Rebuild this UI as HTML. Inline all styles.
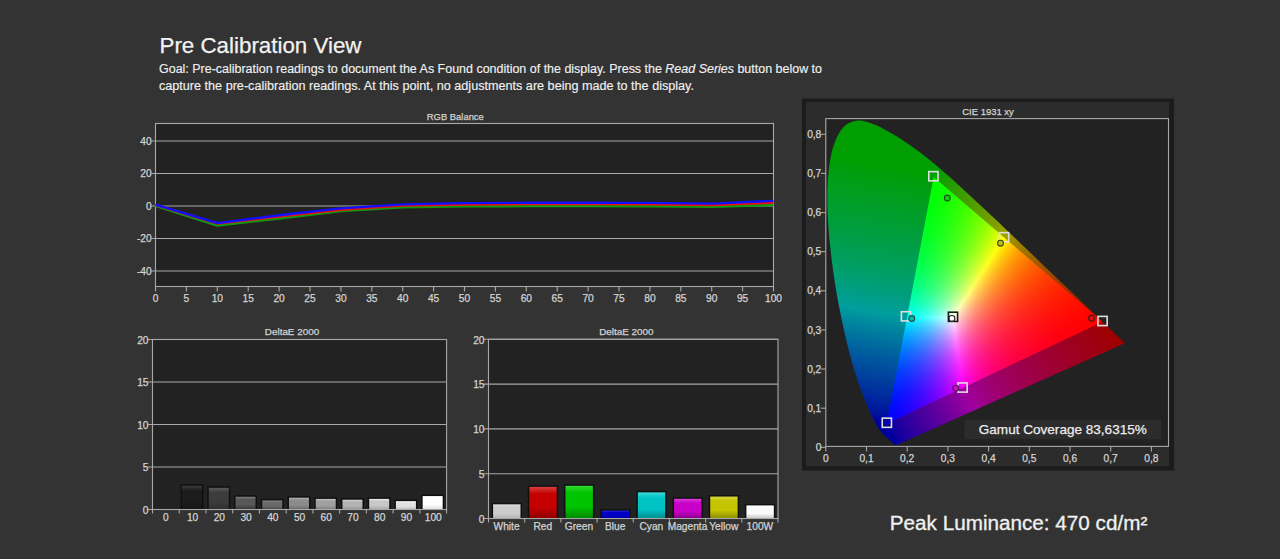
<!DOCTYPE html>
<html><head><meta charset="utf-8">
<style>
html,body{margin:0;padding:0;}
body{width:1280px;height:559px;background:#333333;position:relative;overflow:hidden;font-family:"Liberation Sans", sans-serif;}
svg{position:absolute;left:0;top:0;}
#cie{position:absolute;left:0;top:0;}
</style></head><body>
<svg width="1280" height="559" viewBox="0 0 1280 559" font-family='"Liberation Sans", sans-serif'>
<text x="159.5" y="53.1" font-size="22" fill="#f2f2f2" stroke="#f2f2f2" stroke-width="0.25" textLength="202" lengthAdjust="spacingAndGlyphs">Pre Calibration View</text>
<text x="159" y="72.6" font-size="12.3" fill="#f0f0f0" stroke="#f0f0f0" stroke-width="0.15" textLength="663" lengthAdjust="spacingAndGlyphs">Goal: Pre-calibration readings to document the As Found condition of the display. Press the <tspan font-style="italic">Read Series</tspan> button below to</text>
<text x="159" y="89.6" font-size="12.3" fill="#f0f0f0" stroke="#f0f0f0" stroke-width="0.15" textLength="535" lengthAdjust="spacingAndGlyphs">capture the pre-calibration readings. At this point, no adjustments are being made to the display.</text>
<text x="889.8" y="530.2" font-size="19.5" fill="#f0f0f0" stroke="#f0f0f0" stroke-width="0.3" textLength="257.5" lengthAdjust="spacingAndGlyphs">Peak Luminance: 470 cd/m²</text>
<rect x="155.5" y="123.5" width="618.0" height="163.0" fill="#222222" stroke="#a8a8a8" stroke-width="1.1"/>
<line x1="151.5" y1="141.00" x2="773.5" y2="141.00" stroke="#a8a8a8" stroke-width="1.1"/>
<text x="151.70" y="144.60" font-size="10.2" text-anchor="end" fill="#d4d4d4" stroke="#d4d4d4" stroke-width="0.25" >40</text>
<line x1="151.5" y1="173.50" x2="773.5" y2="173.50" stroke="#a8a8a8" stroke-width="1.1"/>
<text x="151.70" y="177.10" font-size="10.2" text-anchor="end" fill="#d4d4d4" stroke="#d4d4d4" stroke-width="0.25" >20</text>
<line x1="151.5" y1="206.00" x2="773.5" y2="206.00" stroke="#a8a8a8" stroke-width="1.1"/>
<text x="151.70" y="209.60" font-size="10.2" text-anchor="end" fill="#d4d4d4" stroke="#d4d4d4" stroke-width="0.25" >0</text>
<line x1="151.5" y1="238.50" x2="773.5" y2="238.50" stroke="#a8a8a8" stroke-width="1.1"/>
<text x="151.70" y="242.10" font-size="10.2" text-anchor="end" fill="#d4d4d4" stroke="#d4d4d4" stroke-width="0.25" >-20</text>
<line x1="151.5" y1="271.00" x2="773.5" y2="271.00" stroke="#a8a8a8" stroke-width="1.1"/>
<text x="151.70" y="274.60" font-size="10.2" text-anchor="end" fill="#d4d4d4" stroke="#d4d4d4" stroke-width="0.25" >-40</text>
<line x1="155.50" y1="286.5" x2="155.50" y2="291.5" stroke="#a8a8a8" stroke-width="1.1"/>
<text x="155.50" y="301.50" font-size="10.2" text-anchor="middle" fill="#d4d4d4" stroke="#d4d4d4" stroke-width="0.25" >0</text>
<line x1="186.40" y1="286.5" x2="186.40" y2="291.5" stroke="#a8a8a8" stroke-width="1.1"/>
<text x="186.40" y="301.50" font-size="10.2" text-anchor="middle" fill="#d4d4d4" stroke="#d4d4d4" stroke-width="0.25" >5</text>
<line x1="217.30" y1="286.5" x2="217.30" y2="291.5" stroke="#a8a8a8" stroke-width="1.1"/>
<text x="217.30" y="301.50" font-size="10.2" text-anchor="middle" fill="#d4d4d4" stroke="#d4d4d4" stroke-width="0.25" >10</text>
<line x1="248.20" y1="286.5" x2="248.20" y2="291.5" stroke="#a8a8a8" stroke-width="1.1"/>
<text x="248.20" y="301.50" font-size="10.2" text-anchor="middle" fill="#d4d4d4" stroke="#d4d4d4" stroke-width="0.25" >15</text>
<line x1="279.10" y1="286.5" x2="279.10" y2="291.5" stroke="#a8a8a8" stroke-width="1.1"/>
<text x="279.10" y="301.50" font-size="10.2" text-anchor="middle" fill="#d4d4d4" stroke="#d4d4d4" stroke-width="0.25" >20</text>
<line x1="310.00" y1="286.5" x2="310.00" y2="291.5" stroke="#a8a8a8" stroke-width="1.1"/>
<text x="310.00" y="301.50" font-size="10.2" text-anchor="middle" fill="#d4d4d4" stroke="#d4d4d4" stroke-width="0.25" >25</text>
<line x1="340.90" y1="286.5" x2="340.90" y2="291.5" stroke="#a8a8a8" stroke-width="1.1"/>
<text x="340.90" y="301.50" font-size="10.2" text-anchor="middle" fill="#d4d4d4" stroke="#d4d4d4" stroke-width="0.25" >30</text>
<line x1="371.80" y1="286.5" x2="371.80" y2="291.5" stroke="#a8a8a8" stroke-width="1.1"/>
<text x="371.80" y="301.50" font-size="10.2" text-anchor="middle" fill="#d4d4d4" stroke="#d4d4d4" stroke-width="0.25" >35</text>
<line x1="402.70" y1="286.5" x2="402.70" y2="291.5" stroke="#a8a8a8" stroke-width="1.1"/>
<text x="402.70" y="301.50" font-size="10.2" text-anchor="middle" fill="#d4d4d4" stroke="#d4d4d4" stroke-width="0.25" >40</text>
<line x1="433.60" y1="286.5" x2="433.60" y2="291.5" stroke="#a8a8a8" stroke-width="1.1"/>
<text x="433.60" y="301.50" font-size="10.2" text-anchor="middle" fill="#d4d4d4" stroke="#d4d4d4" stroke-width="0.25" >45</text>
<line x1="464.50" y1="286.5" x2="464.50" y2="291.5" stroke="#a8a8a8" stroke-width="1.1"/>
<text x="464.50" y="301.50" font-size="10.2" text-anchor="middle" fill="#d4d4d4" stroke="#d4d4d4" stroke-width="0.25" >50</text>
<line x1="495.40" y1="286.5" x2="495.40" y2="291.5" stroke="#a8a8a8" stroke-width="1.1"/>
<text x="495.40" y="301.50" font-size="10.2" text-anchor="middle" fill="#d4d4d4" stroke="#d4d4d4" stroke-width="0.25" >55</text>
<line x1="526.30" y1="286.5" x2="526.30" y2="291.5" stroke="#a8a8a8" stroke-width="1.1"/>
<text x="526.30" y="301.50" font-size="10.2" text-anchor="middle" fill="#d4d4d4" stroke="#d4d4d4" stroke-width="0.25" >60</text>
<line x1="557.20" y1="286.5" x2="557.20" y2="291.5" stroke="#a8a8a8" stroke-width="1.1"/>
<text x="557.20" y="301.50" font-size="10.2" text-anchor="middle" fill="#d4d4d4" stroke="#d4d4d4" stroke-width="0.25" >65</text>
<line x1="588.10" y1="286.5" x2="588.10" y2="291.5" stroke="#a8a8a8" stroke-width="1.1"/>
<text x="588.10" y="301.50" font-size="10.2" text-anchor="middle" fill="#d4d4d4" stroke="#d4d4d4" stroke-width="0.25" >70</text>
<line x1="619.00" y1="286.5" x2="619.00" y2="291.5" stroke="#a8a8a8" stroke-width="1.1"/>
<text x="619.00" y="301.50" font-size="10.2" text-anchor="middle" fill="#d4d4d4" stroke="#d4d4d4" stroke-width="0.25" >75</text>
<line x1="649.90" y1="286.5" x2="649.90" y2="291.5" stroke="#a8a8a8" stroke-width="1.1"/>
<text x="649.90" y="301.50" font-size="10.2" text-anchor="middle" fill="#d4d4d4" stroke="#d4d4d4" stroke-width="0.25" >80</text>
<line x1="680.80" y1="286.5" x2="680.80" y2="291.5" stroke="#a8a8a8" stroke-width="1.1"/>
<text x="680.80" y="301.50" font-size="10.2" text-anchor="middle" fill="#d4d4d4" stroke="#d4d4d4" stroke-width="0.25" >85</text>
<line x1="711.70" y1="286.5" x2="711.70" y2="291.5" stroke="#a8a8a8" stroke-width="1.1"/>
<text x="711.70" y="301.50" font-size="10.2" text-anchor="middle" fill="#d4d4d4" stroke="#d4d4d4" stroke-width="0.25" >90</text>
<line x1="742.60" y1="286.5" x2="742.60" y2="291.5" stroke="#a8a8a8" stroke-width="1.1"/>
<text x="742.60" y="301.50" font-size="10.2" text-anchor="middle" fill="#d4d4d4" stroke="#d4d4d4" stroke-width="0.25" >95</text>
<line x1="773.50" y1="286.5" x2="773.50" y2="291.5" stroke="#a8a8a8" stroke-width="1.1"/>
<text x="773.50" y="301.50" font-size="10.2" text-anchor="middle" fill="#d4d4d4" stroke="#d4d4d4" stroke-width="0.25" >100</text>
<text x="455.30" y="120.40" font-size="9.8" text-anchor="middle" fill="#d4d4d4" stroke="#d4d4d4" stroke-width="0.25" textLength="57" lengthAdjust="spacingAndGlyphs" >RGB Balance</text>
<polyline points="155.50,205.68 217.30,225.50 279.10,218.35 340.90,211.04 402.70,207.14 464.50,206.32 526.30,206.00 588.10,206.00 649.90,206.16 711.70,206.65 773.50,205.03" fill="none" stroke="#109a10" stroke-width="2.6" stroke-linejoin="round"/>
<polyline points="155.50,204.86 217.30,223.71 279.10,216.72 340.90,209.74 402.70,205.51 464.50,204.54 526.30,204.21 588.10,204.21 649.90,204.38 711.70,205.03 773.50,202.75" fill="none" stroke="#e81010" stroke-width="2.3" stroke-linejoin="round"/>
<polyline points="155.50,204.70 217.30,223.22 279.10,215.26 340.90,208.44 402.70,204.38 464.50,203.07 526.30,202.75 588.10,202.75 649.90,202.91 711.70,203.56 773.50,200.80" fill="none" stroke="#1010ff" stroke-width="2.3" stroke-linejoin="round"/>
<rect x="152.5" y="339.5" width="294.1" height="170.0" fill="#222222" stroke="#a8a8a8" stroke-width="1.1"/>
<line x1="147.5" y1="339.50" x2="446.6" y2="339.50" stroke="#a8a8a8" stroke-width="1.1"/>
<text x="148.50" y="343.70" font-size="10.2" text-anchor="end" fill="#d4d4d4" stroke="#d4d4d4" stroke-width="0.25" >20</text>
<line x1="147.5" y1="382.00" x2="446.6" y2="382.00" stroke="#a8a8a8" stroke-width="1.1"/>
<text x="148.50" y="386.20" font-size="10.2" text-anchor="end" fill="#d4d4d4" stroke="#d4d4d4" stroke-width="0.25" >15</text>
<line x1="147.5" y1="424.50" x2="446.6" y2="424.50" stroke="#a8a8a8" stroke-width="1.1"/>
<text x="148.50" y="428.70" font-size="10.2" text-anchor="end" fill="#d4d4d4" stroke="#d4d4d4" stroke-width="0.25" >10</text>
<line x1="147.5" y1="467.00" x2="446.6" y2="467.00" stroke="#a8a8a8" stroke-width="1.1"/>
<text x="148.50" y="471.20" font-size="10.2" text-anchor="end" fill="#d4d4d4" stroke="#d4d4d4" stroke-width="0.25" >5</text>
<line x1="147.5" y1="509.50" x2="446.6" y2="509.50" stroke="#a8a8a8" stroke-width="1.1"/>
<text x="148.50" y="513.70" font-size="10.2" text-anchor="end" fill="#d4d4d4" stroke="#d4d4d4" stroke-width="0.25" >0</text>
<line x1="152.50" y1="509.5" x2="152.50" y2="513.5" stroke="#a8a8a8" stroke-width="1.1"/>
<line x1="179.24" y1="509.5" x2="179.24" y2="513.5" stroke="#a8a8a8" stroke-width="1.1"/>
<line x1="205.97" y1="509.5" x2="205.97" y2="513.5" stroke="#a8a8a8" stroke-width="1.1"/>
<line x1="232.71" y1="509.5" x2="232.71" y2="513.5" stroke="#a8a8a8" stroke-width="1.1"/>
<line x1="259.45" y1="509.5" x2="259.45" y2="513.5" stroke="#a8a8a8" stroke-width="1.1"/>
<line x1="286.18" y1="509.5" x2="286.18" y2="513.5" stroke="#a8a8a8" stroke-width="1.1"/>
<line x1="312.92" y1="509.5" x2="312.92" y2="513.5" stroke="#a8a8a8" stroke-width="1.1"/>
<line x1="339.65" y1="509.5" x2="339.65" y2="513.5" stroke="#a8a8a8" stroke-width="1.1"/>
<line x1="366.39" y1="509.5" x2="366.39" y2="513.5" stroke="#a8a8a8" stroke-width="1.1"/>
<line x1="393.13" y1="509.5" x2="393.13" y2="513.5" stroke="#a8a8a8" stroke-width="1.1"/>
<line x1="419.86" y1="509.5" x2="419.86" y2="513.5" stroke="#a8a8a8" stroke-width="1.1"/>
<line x1="446.60" y1="509.5" x2="446.60" y2="513.5" stroke="#a8a8a8" stroke-width="1.1"/>
<text x="165.87" y="520.50" font-size="10.2" text-anchor="middle" fill="#d4d4d4" stroke="#d4d4d4" stroke-width="0.25" >0</text>
<linearGradient id="g292_1" x1="0" y1="0" x2="0" y2="1"><stop offset="0" stop-color="#3c3c3c"/><stop offset="0.22" stop-color="#1c1c1c"/><stop offset="0.65" stop-color="#1c1c1c"/><stop offset="1" stop-color="#161616"/></linearGradient>
<rect x="180.54" y="484.20" width="23.00" height="25.30" fill="#101010"/>
<rect x="182.04" y="485.70" width="20.00" height="23.30" fill="url(#g292_1)"/>
<text x="192.60" y="520.50" font-size="10.2" text-anchor="middle" fill="#d4d4d4" stroke="#d4d4d4" stroke-width="0.25" >10</text>
<linearGradient id="g292_2" x1="0" y1="0" x2="0" y2="1"><stop offset="0" stop-color="#5a5a5a"/><stop offset="0.22" stop-color="#3c3c3c"/><stop offset="0.65" stop-color="#3c3c3c"/><stop offset="1" stop-color="#303030"/></linearGradient>
<rect x="207.27" y="486.32" width="23.00" height="23.18" fill="#101010"/>
<rect x="208.77" y="487.82" width="20.00" height="21.18" fill="url(#g292_2)"/>
<text x="219.34" y="520.50" font-size="10.2" text-anchor="middle" fill="#d4d4d4" stroke="#d4d4d4" stroke-width="0.25" >20</text>
<linearGradient id="g292_3" x1="0" y1="0" x2="0" y2="1"><stop offset="0" stop-color="#808080"/><stop offset="0.22" stop-color="#585858"/><stop offset="0.65" stop-color="#585858"/><stop offset="1" stop-color="#3a3a3a"/></linearGradient>
<rect x="234.01" y="495.25" width="23.00" height="14.25" fill="#101010"/>
<rect x="235.51" y="496.75" width="20.00" height="12.25" fill="url(#g292_3)"/>
<text x="246.08" y="520.50" font-size="10.2" text-anchor="middle" fill="#d4d4d4" stroke="#d4d4d4" stroke-width="0.25" >30</text>
<linearGradient id="g292_4" x1="0" y1="0" x2="0" y2="1"><stop offset="0" stop-color="#929292"/><stop offset="0.22" stop-color="#6a6a6a"/><stop offset="0.65" stop-color="#6a6a6a"/><stop offset="1" stop-color="#4c4c4c"/></linearGradient>
<rect x="260.75" y="498.99" width="23.00" height="10.51" fill="#101010"/>
<rect x="262.25" y="500.49" width="20.00" height="8.51" fill="url(#g292_4)"/>
<text x="272.81" y="520.50" font-size="10.2" text-anchor="middle" fill="#d4d4d4" stroke="#d4d4d4" stroke-width="0.25" >40</text>
<linearGradient id="g292_5" x1="0" y1="0" x2="0" y2="1"><stop offset="0" stop-color="#b4b4b4"/><stop offset="0.22" stop-color="#8c8c8c"/><stop offset="0.65" stop-color="#8c8c8c"/><stop offset="1" stop-color="#6e6e6e"/></linearGradient>
<rect x="287.48" y="496.19" width="23.00" height="13.31" fill="#101010"/>
<rect x="288.98" y="497.69" width="20.00" height="11.31" fill="url(#g292_5)"/>
<text x="299.55" y="520.50" font-size="10.2" text-anchor="middle" fill="#d4d4d4" stroke="#d4d4d4" stroke-width="0.25" >50</text>
<linearGradient id="g292_6" x1="0" y1="0" x2="0" y2="1"><stop offset="0" stop-color="#c8c8c8"/><stop offset="0.22" stop-color="#a0a0a0"/><stop offset="0.65" stop-color="#a0a0a0"/><stop offset="1" stop-color="#828282"/></linearGradient>
<rect x="314.22" y="497.38" width="23.00" height="12.12" fill="#101010"/>
<rect x="315.72" y="498.88" width="20.00" height="10.12" fill="url(#g292_6)"/>
<text x="326.29" y="520.50" font-size="10.2" text-anchor="middle" fill="#d4d4d4" stroke="#d4d4d4" stroke-width="0.25" >60</text>
<linearGradient id="g292_7" x1="0" y1="0" x2="0" y2="1"><stop offset="0" stop-color="#dcdcdc"/><stop offset="0.22" stop-color="#b4b4b4"/><stop offset="0.65" stop-color="#b4b4b4"/><stop offset="1" stop-color="#969696"/></linearGradient>
<rect x="340.95" y="498.23" width="23.00" height="11.27" fill="#101010"/>
<rect x="342.45" y="499.73" width="20.00" height="9.27" fill="url(#g292_7)"/>
<text x="353.02" y="520.50" font-size="10.2" text-anchor="middle" fill="#d4d4d4" stroke="#d4d4d4" stroke-width="0.25" >70</text>
<linearGradient id="g292_8" x1="0" y1="0" x2="0" y2="1"><stop offset="0" stop-color="#f0f0f0"/><stop offset="0.22" stop-color="#c8c8c8"/><stop offset="0.65" stop-color="#c8c8c8"/><stop offset="1" stop-color="#aaaaaa"/></linearGradient>
<rect x="367.69" y="497.38" width="23.00" height="12.12" fill="#101010"/>
<rect x="369.19" y="498.88" width="20.00" height="10.12" fill="url(#g292_8)"/>
<text x="379.76" y="520.50" font-size="10.2" text-anchor="middle" fill="#d4d4d4" stroke="#d4d4d4" stroke-width="0.25" >80</text>
<linearGradient id="g292_9" x1="0" y1="0" x2="0" y2="1"><stop offset="0" stop-color="#ffffff"/><stop offset="0.22" stop-color="#e1e1e1"/><stop offset="0.65" stop-color="#e1e1e1"/><stop offset="1" stop-color="#c3c3c3"/></linearGradient>
<rect x="394.43" y="499.67" width="23.00" height="9.83" fill="#101010"/>
<rect x="395.93" y="501.17" width="20.00" height="7.83" fill="url(#g292_9)"/>
<text x="406.50" y="520.50" font-size="10.2" text-anchor="middle" fill="#d4d4d4" stroke="#d4d4d4" stroke-width="0.25" >90</text>
<linearGradient id="g292_10" x1="0" y1="0" x2="0" y2="1"><stop offset="0" stop-color="#ffffff"/><stop offset="0.22" stop-color="#ffffff"/><stop offset="0.65" stop-color="#ffffff"/><stop offset="1" stop-color="#e1e1e1"/></linearGradient>
<rect x="421.16" y="494.57" width="23.00" height="14.93" fill="#101010"/>
<rect x="422.66" y="496.07" width="20.00" height="12.93" fill="url(#g292_10)"/>
<text x="433.23" y="520.50" font-size="10.2" text-anchor="middle" fill="#d4d4d4" stroke="#d4d4d4" stroke-width="0.25" >100</text>
<line x1="152.5" y1="509.5" x2="446.6" y2="509.5" stroke="#a8a8a8" stroke-width="1.1"/>
<text x="292.00" y="335.00" font-size="9.8" text-anchor="middle" fill="#d4d4d4" stroke="#d4d4d4" stroke-width="0.25" textLength="54.3" lengthAdjust="spacingAndGlyphs" >DeltaE 2000</text>
<rect x="488.5" y="339.3" width="289.5" height="179.2" fill="#222222" stroke="#a8a8a8" stroke-width="1.1"/>
<line x1="483.5" y1="339.30" x2="778.0" y2="339.30" stroke="#a8a8a8" stroke-width="1.1"/>
<text x="484.50" y="343.50" font-size="10.2" text-anchor="end" fill="#d4d4d4" stroke="#d4d4d4" stroke-width="0.25" >20</text>
<line x1="483.5" y1="384.10" x2="778.0" y2="384.10" stroke="#a8a8a8" stroke-width="1.1"/>
<text x="484.50" y="388.30" font-size="10.2" text-anchor="end" fill="#d4d4d4" stroke="#d4d4d4" stroke-width="0.25" >15</text>
<line x1="483.5" y1="428.90" x2="778.0" y2="428.90" stroke="#a8a8a8" stroke-width="1.1"/>
<text x="484.50" y="433.10" font-size="10.2" text-anchor="end" fill="#d4d4d4" stroke="#d4d4d4" stroke-width="0.25" >10</text>
<line x1="483.5" y1="473.70" x2="778.0" y2="473.70" stroke="#a8a8a8" stroke-width="1.1"/>
<text x="484.50" y="477.90" font-size="10.2" text-anchor="end" fill="#d4d4d4" stroke="#d4d4d4" stroke-width="0.25" >5</text>
<line x1="483.5" y1="518.50" x2="778.0" y2="518.50" stroke="#a8a8a8" stroke-width="1.1"/>
<text x="484.50" y="522.70" font-size="10.2" text-anchor="end" fill="#d4d4d4" stroke="#d4d4d4" stroke-width="0.25" >0</text>
<line x1="488.50" y1="518.5" x2="488.50" y2="522.5" stroke="#a8a8a8" stroke-width="1.1"/>
<line x1="524.69" y1="518.5" x2="524.69" y2="522.5" stroke="#a8a8a8" stroke-width="1.1"/>
<line x1="560.88" y1="518.5" x2="560.88" y2="522.5" stroke="#a8a8a8" stroke-width="1.1"/>
<line x1="597.06" y1="518.5" x2="597.06" y2="522.5" stroke="#a8a8a8" stroke-width="1.1"/>
<line x1="633.25" y1="518.5" x2="633.25" y2="522.5" stroke="#a8a8a8" stroke-width="1.1"/>
<line x1="669.44" y1="518.5" x2="669.44" y2="522.5" stroke="#a8a8a8" stroke-width="1.1"/>
<line x1="705.62" y1="518.5" x2="705.62" y2="522.5" stroke="#a8a8a8" stroke-width="1.1"/>
<line x1="741.81" y1="518.5" x2="741.81" y2="522.5" stroke="#a8a8a8" stroke-width="1.1"/>
<line x1="778.00" y1="518.5" x2="778.00" y2="522.5" stroke="#a8a8a8" stroke-width="1.1"/>
<linearGradient id="g626_0" x1="0" y1="0" x2="0" y2="1"><stop offset="0" stop-color="#e0e0e0"/><stop offset="0.22" stop-color="#cccccc"/><stop offset="0.65" stop-color="#cccccc"/><stop offset="1" stop-color="#b4b4b4"/></linearGradient>
<rect x="491.60" y="502.84" width="30.40" height="15.66" fill="#101010"/>
<rect x="493.10" y="504.34" width="27.40" height="13.66" fill="url(#g626_0)"/>
<text x="506.59" y="529.50" font-size="10.2" text-anchor="middle" fill="#d4d4d4" stroke="#d4d4d4" stroke-width="0.25" >White</text>
<linearGradient id="g626_1" x1="0" y1="0" x2="0" y2="1"><stop offset="0" stop-color="#d84040"/><stop offset="0.22" stop-color="#c60000"/><stop offset="0.65" stop-color="#c60000"/><stop offset="1" stop-color="#900000"/></linearGradient>
<rect x="527.79" y="485.37" width="30.40" height="33.13" fill="#101010"/>
<rect x="529.29" y="486.87" width="27.40" height="31.13" fill="url(#g626_1)"/>
<text x="542.78" y="529.50" font-size="10.2" text-anchor="middle" fill="#d4d4d4" stroke="#d4d4d4" stroke-width="0.25" >Red</text>
<linearGradient id="g626_2" x1="0" y1="0" x2="0" y2="1"><stop offset="0" stop-color="#30d830"/><stop offset="0.22" stop-color="#00c400"/><stop offset="0.65" stop-color="#00c400"/><stop offset="1" stop-color="#008a00"/></linearGradient>
<rect x="563.98" y="484.30" width="30.40" height="34.20" fill="#101010"/>
<rect x="565.48" y="485.80" width="27.40" height="32.20" fill="url(#g626_2)"/>
<text x="578.97" y="529.50" font-size="10.2" text-anchor="middle" fill="#d4d4d4" stroke="#d4d4d4" stroke-width="0.25" >Green</text>
<linearGradient id="g626_3" x1="0" y1="0" x2="0" y2="1"><stop offset="0" stop-color="#3030e0"/><stop offset="0.22" stop-color="#0000c8"/><stop offset="0.65" stop-color="#0000c8"/><stop offset="1" stop-color="#0000a0"/></linearGradient>
<rect x="600.16" y="509.12" width="30.40" height="9.38" fill="#101010"/>
<rect x="601.66" y="510.62" width="27.40" height="7.38" fill="url(#g626_3)"/>
<text x="615.16" y="529.50" font-size="10.2" text-anchor="middle" fill="#d4d4d4" stroke="#d4d4d4" stroke-width="0.25" >Blue</text>
<linearGradient id="g626_4" x1="0" y1="0" x2="0" y2="1"><stop offset="0" stop-color="#40d8d8"/><stop offset="0.22" stop-color="#00c4c4"/><stop offset="0.65" stop-color="#00c4c4"/><stop offset="1" stop-color="#009090"/></linearGradient>
<rect x="636.35" y="490.84" width="30.40" height="27.66" fill="#101010"/>
<rect x="637.85" y="492.34" width="27.40" height="25.66" fill="url(#g626_4)"/>
<text x="651.34" y="529.50" font-size="10.2" text-anchor="middle" fill="#d4d4d4" stroke="#d4d4d4" stroke-width="0.25" >Cyan</text>
<linearGradient id="g626_5" x1="0" y1="0" x2="0" y2="1"><stop offset="0" stop-color="#d840d8"/><stop offset="0.22" stop-color="#c800c8"/><stop offset="0.65" stop-color="#c800c8"/><stop offset="1" stop-color="#900090"/></linearGradient>
<rect x="672.54" y="497.29" width="30.40" height="21.21" fill="#101010"/>
<rect x="674.04" y="498.79" width="27.40" height="19.21" fill="url(#g626_5)"/>
<text x="687.53" y="529.50" font-size="10.2" text-anchor="middle" fill="#d4d4d4" stroke="#d4d4d4" stroke-width="0.25" >Magenta</text>
<linearGradient id="g626_6" x1="0" y1="0" x2="0" y2="1"><stop offset="0" stop-color="#d8d840"/><stop offset="0.22" stop-color="#c4c400"/><stop offset="0.65" stop-color="#c4c400"/><stop offset="1" stop-color="#909000"/></linearGradient>
<rect x="708.73" y="495.05" width="30.40" height="23.45" fill="#101010"/>
<rect x="710.23" y="496.55" width="27.40" height="21.45" fill="url(#g626_6)"/>
<text x="723.72" y="529.50" font-size="10.2" text-anchor="middle" fill="#d4d4d4" stroke="#d4d4d4" stroke-width="0.25" >Yellow</text>
<linearGradient id="g626_7" x1="0" y1="0" x2="0" y2="1"><stop offset="0" stop-color="#ffffff"/><stop offset="0.22" stop-color="#fafafa"/><stop offset="0.65" stop-color="#fafafa"/><stop offset="1" stop-color="#c8c8c8"/></linearGradient>
<rect x="744.91" y="503.92" width="30.40" height="14.58" fill="#101010"/>
<rect x="746.41" y="505.42" width="27.40" height="12.58" fill="url(#g626_7)"/>
<text x="759.91" y="529.50" font-size="10.2" text-anchor="middle" fill="#d4d4d4" stroke="#d4d4d4" stroke-width="0.25" >100W</text>
<line x1="488.5" y1="518.5" x2="778.0" y2="518.5" stroke="#a8a8a8" stroke-width="1.1"/>
<text x="626.30" y="335.00" font-size="9.8" text-anchor="middle" fill="#d4d4d4" stroke="#d4d4d4" stroke-width="0.25" textLength="54.3" lengthAdjust="spacingAndGlyphs" >DeltaE 2000</text>
<rect x="802" y="98.5" width="372" height="372" fill="#1b1b1b"/>
<rect x="806" y="101.8" width="363.2" height="364.5" fill="#2c2c2c"/>
<rect x="825.8" y="118.6" width="342.70000000000005" height="327.79999999999995" fill="#222222" stroke="#a8a8a8" stroke-width="1.1"/>
<line x1="820.8" y1="447.30" x2="825.8" y2="447.30" stroke="#a8a8a8" stroke-width="1.1"/>
<text x="821.30" y="450.90" font-size="10.2" text-anchor="end" fill="#d4d4d4" stroke="#d4d4d4" stroke-width="0.25" >0</text>
<line x1="825.80" y1="446.4" x2="825.80" y2="451.4" stroke="#a8a8a8" stroke-width="1.1"/>
<text x="825.80" y="461.50" font-size="10.2" text-anchor="middle" fill="#d4d4d4" stroke="#d4d4d4" stroke-width="0.25" >0</text>
<line x1="820.8" y1="408.17" x2="825.8" y2="408.17" stroke="#a8a8a8" stroke-width="1.1"/>
<text x="821.30" y="411.77" font-size="10.2" text-anchor="end" fill="#d4d4d4" stroke="#d4d4d4" stroke-width="0.25" >0,1</text>
<line x1="866.50" y1="446.4" x2="866.50" y2="451.4" stroke="#a8a8a8" stroke-width="1.1"/>
<text x="866.50" y="461.50" font-size="10.2" text-anchor="middle" fill="#d4d4d4" stroke="#d4d4d4" stroke-width="0.25" >0,1</text>
<line x1="820.8" y1="369.04" x2="825.8" y2="369.04" stroke="#a8a8a8" stroke-width="1.1"/>
<text x="821.30" y="372.64" font-size="10.2" text-anchor="end" fill="#d4d4d4" stroke="#d4d4d4" stroke-width="0.25" >0,2</text>
<line x1="907.20" y1="446.4" x2="907.20" y2="451.4" stroke="#a8a8a8" stroke-width="1.1"/>
<text x="907.20" y="461.50" font-size="10.2" text-anchor="middle" fill="#d4d4d4" stroke="#d4d4d4" stroke-width="0.25" >0,2</text>
<line x1="820.8" y1="329.91" x2="825.8" y2="329.91" stroke="#a8a8a8" stroke-width="1.1"/>
<text x="821.30" y="333.51" font-size="10.2" text-anchor="end" fill="#d4d4d4" stroke="#d4d4d4" stroke-width="0.25" >0,3</text>
<line x1="947.90" y1="446.4" x2="947.90" y2="451.4" stroke="#a8a8a8" stroke-width="1.1"/>
<text x="947.90" y="461.50" font-size="10.2" text-anchor="middle" fill="#d4d4d4" stroke="#d4d4d4" stroke-width="0.25" >0,3</text>
<line x1="820.8" y1="290.78" x2="825.8" y2="290.78" stroke="#a8a8a8" stroke-width="1.1"/>
<text x="821.30" y="294.38" font-size="10.2" text-anchor="end" fill="#d4d4d4" stroke="#d4d4d4" stroke-width="0.25" >0,4</text>
<line x1="988.60" y1="446.4" x2="988.60" y2="451.4" stroke="#a8a8a8" stroke-width="1.1"/>
<text x="988.60" y="461.50" font-size="10.2" text-anchor="middle" fill="#d4d4d4" stroke="#d4d4d4" stroke-width="0.25" >0,4</text>
<line x1="820.8" y1="251.65" x2="825.8" y2="251.65" stroke="#a8a8a8" stroke-width="1.1"/>
<text x="821.30" y="255.25" font-size="10.2" text-anchor="end" fill="#d4d4d4" stroke="#d4d4d4" stroke-width="0.25" >0,5</text>
<line x1="1029.30" y1="446.4" x2="1029.30" y2="451.4" stroke="#a8a8a8" stroke-width="1.1"/>
<text x="1029.30" y="461.50" font-size="10.2" text-anchor="middle" fill="#d4d4d4" stroke="#d4d4d4" stroke-width="0.25" >0,5</text>
<line x1="820.8" y1="212.52" x2="825.8" y2="212.52" stroke="#a8a8a8" stroke-width="1.1"/>
<text x="821.30" y="216.12" font-size="10.2" text-anchor="end" fill="#d4d4d4" stroke="#d4d4d4" stroke-width="0.25" >0,6</text>
<line x1="1070.00" y1="446.4" x2="1070.00" y2="451.4" stroke="#a8a8a8" stroke-width="1.1"/>
<text x="1070.00" y="461.50" font-size="10.2" text-anchor="middle" fill="#d4d4d4" stroke="#d4d4d4" stroke-width="0.25" >0,6</text>
<line x1="820.8" y1="173.39" x2="825.8" y2="173.39" stroke="#a8a8a8" stroke-width="1.1"/>
<text x="821.30" y="176.99" font-size="10.2" text-anchor="end" fill="#d4d4d4" stroke="#d4d4d4" stroke-width="0.25" >0,7</text>
<line x1="1110.70" y1="446.4" x2="1110.70" y2="451.4" stroke="#a8a8a8" stroke-width="1.1"/>
<text x="1110.70" y="461.50" font-size="10.2" text-anchor="middle" fill="#d4d4d4" stroke="#d4d4d4" stroke-width="0.25" >0,7</text>
<line x1="820.8" y1="134.26" x2="825.8" y2="134.26" stroke="#a8a8a8" stroke-width="1.1"/>
<text x="821.30" y="137.86" font-size="10.2" text-anchor="end" fill="#d4d4d4" stroke="#d4d4d4" stroke-width="0.25" >0,8</text>
<line x1="1151.40" y1="446.4" x2="1151.40" y2="451.4" stroke="#a8a8a8" stroke-width="1.1"/>
<text x="1151.40" y="461.50" font-size="10.2" text-anchor="middle" fill="#d4d4d4" stroke="#d4d4d4" stroke-width="0.25" >0,8</text>
<text x="988.00" y="115.00" font-size="9.8" text-anchor="middle" fill="#d4d4d4" stroke="#d4d4d4" stroke-width="0.25" textLength="51.5" lengthAdjust="spacingAndGlyphs" >CIE 1931 xy</text>
</svg>
<canvas id="cie" width="1280" height="559"></canvas>
<svg width="1280" height="559" viewBox="0 0 1280 559" font-family='"Liberation Sans", sans-serif'>
<rect x="964.6" y="420" width="196.4" height="19.2" fill="#2c2c2c"/>
<text x="1062.80" y="434.20" font-size="13.2" text-anchor="middle" fill="#ececec" stroke="#ececec" stroke-width="0.25" textLength="168" lengthAdjust="spacingAndGlyphs" >Gamut Coverage 83,6315%</text>
<rect x="928.81" y="171.62" width="9.2" height="9.2" fill="none" stroke="#dedede" stroke-width="1.6"/>
<rect x="999.47" y="232.66" width="9.2" height="9.2" fill="none" stroke="#dedede" stroke-width="1.6"/>
<rect x="901.38" y="311.71" width="9.2" height="9.2" fill="none" stroke="#dedede" stroke-width="1.6"/>
<rect x="957.95" y="382.92" width="9.2" height="9.2" fill="none" stroke="#dedede" stroke-width="1.6"/>
<rect x="1097.96" y="316.40" width="9.2" height="9.2" fill="none" stroke="#dedede" stroke-width="1.6"/>
<rect x="882.25" y="418.14" width="9.2" height="9.2" fill="none" stroke="#dedede" stroke-width="1.6"/>
<rect x="948.39" y="312.21" width="9.2" height="9.2" fill="none" stroke="#1a1a1a" stroke-width="1.6"/>
<circle cx="947.30" cy="198.00" r="2.9" fill="#10d010" stroke="#185018" stroke-width="1.1"/>
<circle cx="1000.50" cy="243.20" r="2.9" fill="#c0c010" stroke="#404010" stroke-width="1.1"/>
<circle cx="911.80" cy="318.50" r="2.9" fill="#10b8a0" stroke="#185048" stroke-width="1.1"/>
<circle cx="951.90" cy="318.40" r="2.9" fill="#ffffff" stroke="#202020" stroke-width="1.1"/>
<circle cx="955.80" cy="388.30" r="2.9" fill="#d010d0" stroke="#501050" stroke-width="1.1"/>
<circle cx="1091.50" cy="318.30" r="2.9" fill="#e01010" stroke="#501010" stroke-width="1.1"/>
<circle cx="886.90" cy="422.50" r="2.9" fill="#0000d0" stroke="#101070" stroke-width="1.1"/>
</svg>
<script>
(function(){
var LOC = [[896.66, 445.04], [896.33, 445.12], [896.05, 445.12], [895.84, 445.12], [895.56, 445.0], [895.11, 444.73], [894.54, 444.3], [893.73, 443.63], [892.71, 442.73], [891.37, 441.6], [889.54, 440.07], [887.26, 438.12], [884.41, 435.38], [880.95, 431.39], [876.31, 424.38], [870.41, 413.04], [862.96, 395.07], [853.76, 368.47], [844.28, 331.57], [835.36, 285.51], [829.14, 236.32], [827.39, 190.78], [831.46, 153.45], [841.63, 129.26], [856.04, 120.73], [872.28, 123.71], [888.76, 131.65], [904.31, 141.16], [919.25, 151.84], [933.98, 163.58], [948.55, 176.1], [963.08, 189.17], [977.65, 202.63], [992.14, 216.29], [1006.55, 229.95], [1020.67, 243.45], [1034.39, 256.59], [1047.53, 269.19], [1059.91, 281.01], [1071.18, 291.85], [1080.99, 301.24], [1089.62, 309.5], [1096.78, 316.31], [1102.6, 321.9], [1107.24, 326.36], [1110.94, 329.88], [1113.92, 332.74], [1116.4, 335.13], [1118.43, 337.08], [1120.06, 338.61], [1121.28, 339.78], [1122.91, 341.35], [1124.29, 342.68], [1124.82, 343.19]];
var c = document.getElementById('cie'); var ctx = c.getContext('2d');
var x0=825.8, sx=407.0, y0=447.0, sy=391.3;
var ox=826, oy=119, W=343, H=328;
var off = document.createElement('canvas'); off.width=1280; off.height=559;
var octx = off.getContext('2d');
var img = octx.createImageData(W,H); var d = img.data;
// P3 primaries
var P = [[0.680,0.320],[0.265,0.690],[0.150,0.060]];
var M = [[2.4935,-0.9314,-0.4027],[-0.8295,1.7627,0.0236],[0.0358,-0.0762,0.9569]];
function rgb(x,y,GAM){
  var X=x/y, Y=1, Z=(1-x-y)/y;
  var r=M[0][0]*X+M[0][1]*Y+M[0][2]*Z, g=M[1][0]*X+M[1][1]*Y+M[1][2]*Z, b=M[2][0]*X+M[2][1]*Y+M[2][2]*Z;
  r=Math.max(0,r); g=Math.max(0,g); b=Math.max(0,b);
  var m=Math.max(r,g,b); if(m<=0) m=1;
  r/=m; g/=m; b/=m;
  return [Math.pow(r,GAM),Math.pow(g,GAM),Math.pow(b,GAM)];
}
function side(ax,ay,bx,by,px,py){ return (bx-ax)*(py-ay)-(by-ay)*(px-ax); }
function proj(ax,ay,bx,by,px,py){
  var dx=bx-ax, dy=by-ay; var t=((px-ax)*dx+(py-ay)*dy)/(dx*dx+dy*dy); t=Math.max(0,Math.min(1,t));
  return [ax+t*dx, ay+t*dy, (px-ax-t*dx)*(px-ax-t*dx)+(py-ay-t*dy)*(py-ay-t*dy)];
}
var DIM = 0.62; var GIN = 1.3, GOUT = 0.7;
function col(x,y){
  if (y<0.001) y=0.001;
  var s1=side(P[0][0],P[0][1],P[1][0],P[1][1],x,y), s2=side(P[1][0],P[1][1],P[2][0],P[2][1],x,y), s3=side(P[2][0],P[2][1],P[0][0],P[0][1],x,y);
  var inside = (s1>=0&&s2>=0&&s3>=0)||(s1<=0&&s2<=0&&s3<=0);
  if (inside) return rgb(x,y,GIN);
  var best=null;
  for (var e=0;e<3;e++){ var a=P[e], b=P[(e+1)%3]; var q=proj(a[0],a[1],b[0],b[1],x,y); if(!best||q[2]<best[2]) best=q; }
  var c3=rgb(best[0],best[1],GOUT); return [c3[0]*DIM,c3[1]*DIM,c3[2]*DIM];
}
var SS=3;
for (var j=0;j<H;j++) for (var i=0;i<W;i++){
  var k=(j*W+i)*4, r=0,g=0,b=0;
  for (var u=0;u<SS;u++) for (var v=0;v<SS;v++){
    var px=ox+i+(u+0.5)/SS, py=oy+j+(v+0.5)/SS;
    var cc=col((px-x0)/sx,(y0-py)/sy); r+=cc[0]; g+=cc[1]; b+=cc[2];
  }
  var nn=SS*SS;
  d[k]=255*r/nn; d[k+1]=255*g/nn; d[k+2]=255*b/nn; d[k+3]=255;
}
octx.putImageData(img,ox,oy);
ctx.save();
ctx.beginPath();
ctx.moveTo(LOC[0][0],LOC[0][1]);
var NL = LOC.length;
for (var n=0;n<NL-1;n++){
  var p0 = LOC[Math.max(0,n-1)], p1=LOC[n], p2=LOC[n+1], p3=LOC[Math.min(NL-1,n+2)];
  var c1x = p1[0]+(p2[0]-p0[0])/6, c1y = p1[1]+(p2[1]-p0[1])/6;
  var c2x = p2[0]-(p3[0]-p1[0])/6, c2y = p2[1]-(p3[1]-p1[1])/6;
  ctx.bezierCurveTo(c1x,c1y,c2x,c2y,p2[0],p2[1]);
}
ctx.closePath();
ctx.fillStyle = ctx.createPattern(off,'no-repeat');
ctx.fill();
ctx.restore();
})();
</script>
</body></html>
